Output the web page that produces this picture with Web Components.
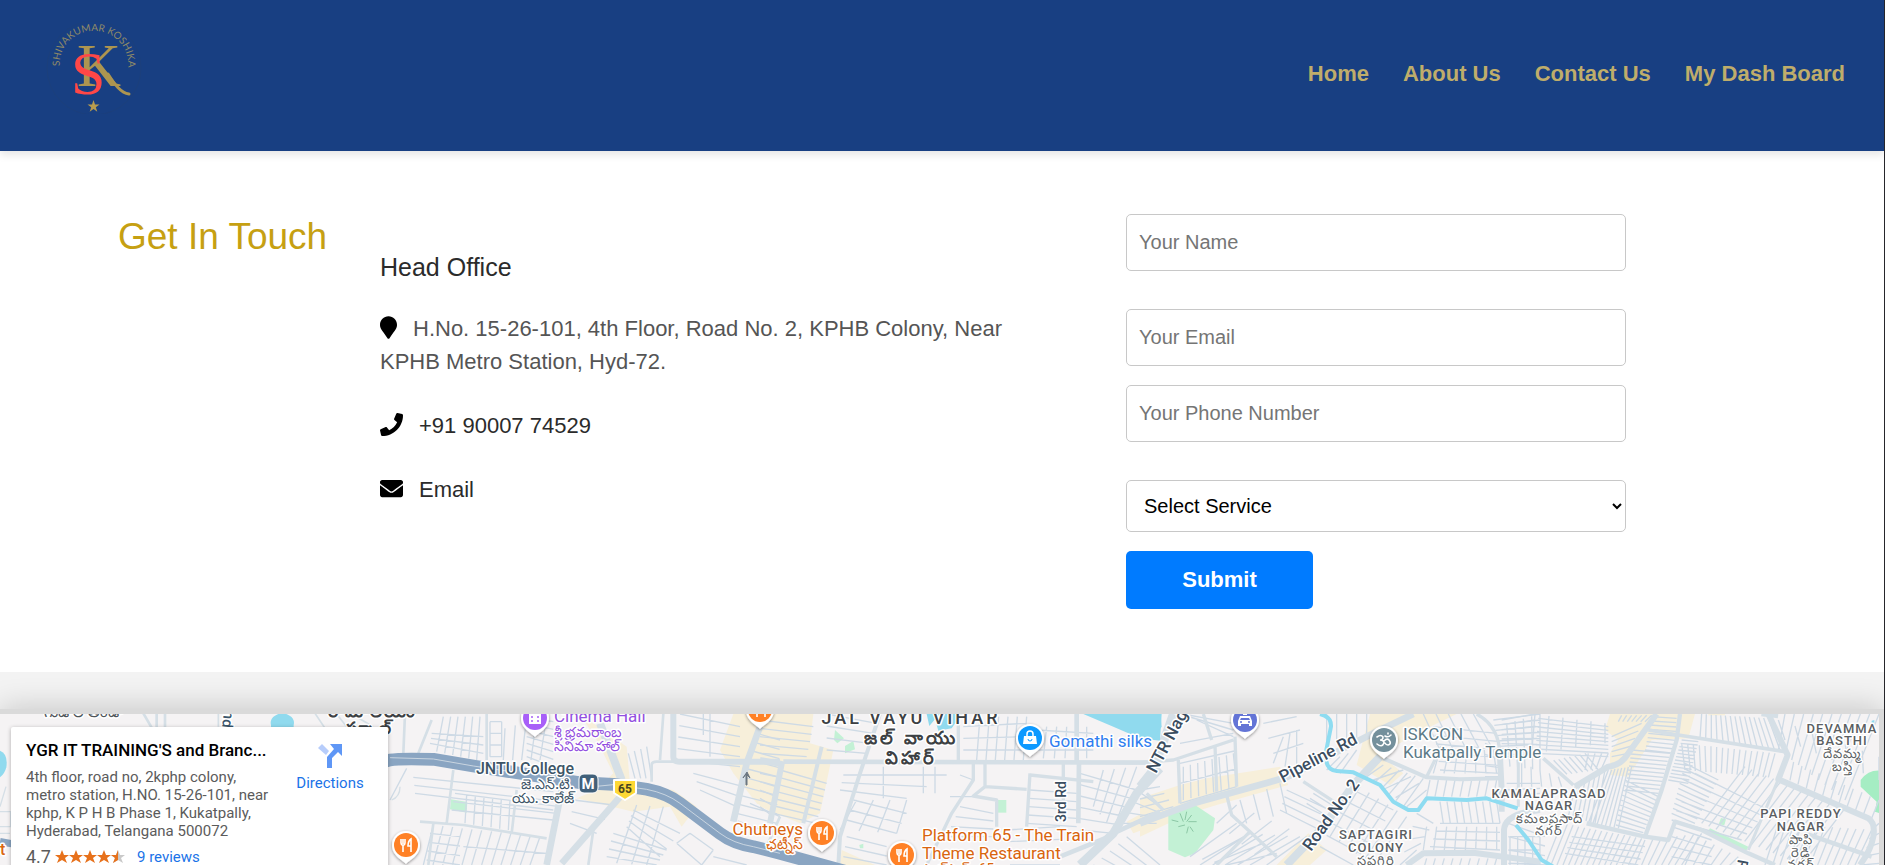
<!DOCTYPE html>
<html lang="en">
<head>
<meta charset="utf-8">
<title>Contact Us</title>
<meta name="viewport" content="width=device-width, initial-scale=1">
<style>
  * { box-sizing: border-box; }
  body {
    margin: 0;
    min-height: 100vh;
    display: flex;
    flex-direction: column;
    overflow: hidden;
    background: #fff;
    border-right: 1px solid #26262b;
    font-family: "Liberation Sans", Arial, sans-serif;
  }
  map-panel { flex: 1; }
</style>
</head>
<body>
<site-header>
  <nav-link href="#home">Home</nav-link>
  <nav-link href="#about">About Us</nav-link>
  <nav-link href="#contact">Contact Us</nav-link>
  <nav-link href="#dashboard">My Dash Board</nav-link>
</site-header>
<contact-section>
  <span slot="title">Get In Touch</span>
  <span slot="office">Head Office</span>
  <contact-row icon="pin" muted>H.No. 15-26-101, 4th Floor, Road No. 2, KPHB Colony, Near KPHB Metro Station, Hyd-72.</contact-row>
  <contact-row icon="phone" href="tel:+919000774529">+91 90007 74529</contact-row>
  <contact-row icon="mail" href="mailto:info@example.com">Email</contact-row>
  <contact-form slot="form"></contact-form>
</contact-section>
<map-panel>
  <map-canvas></map-canvas>
  <place-card slot="card"></place-card>
</map-panel>

<script>
class BaseElement extends HTMLElement {
  connectedCallback() {
    if (this.shadowRoot) return;
    this.attachShadow({ mode: 'open' }).innerHTML = this.render();
  }
}

customElements.define('brand-logo', class extends BaseElement {
  render() {
    return `<style>
      :host { display: block; width: 96px; height: 96px; }
      svg { display: block; }
    </style>
    <svg width="96" height="96" viewBox="0 0 96 96" role="img" aria-label="Shivakumar Koshika">
      <defs><path id="arc" d="M14 48C12 30 27 13 48 13S84 30 82 50"/></defs>
      <circle cx="48" cy="50" r="47" fill="none" stroke="#1c3f7c" stroke-width="1"/>
      <text font-family="Lato, sans-serif" font-size="10" fill="#8f8a68"><textPath href="#arc">SHIVAKUMAR KOSHIKA</textPath></text>
      <text x="31" y="68" font-family="Liberation Serif, serif" font-size="61" fill="#ad9550">K</text>
      <path d="M62 56C69 67 75 75 83 76" fill="none" stroke="#ad9550" stroke-width="3" stroke-linecap="round"/>
      <text x="25" y="76" font-family="Liberation Serif, serif" font-size="62" fill="#ff4747">S</text>
      <path d="M47.500 82l1.500 4.500h4.500l-3.700 2.700 1.500 4.500-3.800-2.700-3.800 2.700 1.500-4.500-3.700-2.700h4.500z" fill="#b79c4e"/>
    </svg>`;
  }
});

customElements.define('nav-link', class extends BaseElement {
  render() {
    return `<style>
      :host { display: block; }
      a { color: #bfad6b; font-size: 22px; line-height: 26px; font-weight: 700; text-decoration: none; white-space: nowrap; }
    </style><a href="${this.getAttribute('href')}"><slot></slot></a>`;
  }
});

customElements.define('site-header', class extends BaseElement {
  render() {
    return `<style>
      :host { display: block; position: relative; background: #183f82; box-shadow: 0 4px 8px rgba(0,0,0,.1); }
      header { display: flex; justify-content: space-between; align-items: flex-start; padding: 18px 39px 37px 46px; }
      nav { display: flex; gap: 34px; padding-top: 43px; }
    </style>
    <header><brand-logo></brand-logo><nav><slot></slot></nav></header>`;
  }
});

const ICONS = {
  pin: ['0 0 384 512', 17, 23, 'M172.268 501.67C26.97 291.031 0 269.413 0 192 0 85.961 85.961 0 192 0s192 85.961 192 192c0 77.413-26.97 99.031-172.268 309.67-9.535 13.774-29.93 13.773-39.464 0z'],
  phone: ['0 0 512 512', 23, 23, 'M493.4 24.6l-104-24c-11.3-2.6-22.9 3.3-27.5 13.9l-48 112c-4.2 9.8-1.4 21.3 6.9 28l60.6 49.6c-36 76.7-98.9 140.5-177.2 177.2l-49.6-60.6c-6.8-8.3-18.2-11.1-28-6.9l-112 48C3.9 366.5-2 378.1.6 389.4l24 104C27.1 504.2 36.7 512 48 512c256.1 0 464-207.5 464-464 0-11.2-7.7-20.9-18.6-23.4z'],
  mail: ['0 0 512 512', 23, 23, 'M502.3 190.8c3.9-3.1 9.7-.2 9.7 4.7V400c0 26.5-21.5 48-48 48H48c-26.5 0-48-21.5-48-48V195.6c0-5 5.7-7.8 9.7-4.7 22.4 17.4 52.1 39.5 154.1 113.6 21.1 15.4 56.7 47.8 92.2 47.6 35.7.3 72-32.8 92.3-47.6 102-74.1 131.6-96.3 154-113.7zM256 320c23.2.4 56.6-29.2 73.4-41.4 132.7-96.3 142.8-104.7 173.4-128.7 5.8-4.5 9.2-11.5 9.2-18.9v-19c0-26.5-21.5-48-48-48H48c-26.5 0-48 21.5-48 48v19c0 7.4 3.4 14.3 9.2 18.9 30.6 23.9 40.7 32.4 173.4 128.7 16.8 12.2 50.2 41.8 73.4 41.4z']
};

customElements.define('contact-row', class extends BaseElement {
  render() {
    const [box, w, h, d] = ICONS[this.getAttribute('icon')];
    const href = this.getAttribute('href');
    return `<style>
      :host { display: block; font-size: 22px; line-height: 33px; color: #2b2b2b; }
      :host([muted]) { color: #555; }
      p { margin: 0; }
      svg { fill: #000; vertical-align: -3px; margin-right: 16px; }
      a { color: inherit; text-decoration: none; }
    </style>
    <p><svg width="${w}" height="${h}" viewBox="${box}" aria-hidden="true"><path d="${d}"/></svg>${href ? `<a href="${href}"><slot></slot></a>` : '<slot></slot>'}</p>`;
  }
});

customElements.define('contact-section', class extends BaseElement {
  render() {
    return `<style>
      :host { display: block; background: #fff; }
      section { display: grid; grid-template-columns: 262px minmax(0, 1fr) 500px; padding: 63px 258px 63px 118px; }
      h2 { margin: 0; font-weight: 400; font-size: 37px; line-height: 46px; color: #c6a012; white-space: nowrap; }
      h3 { margin: 0 0 -3px; font-weight: 400; font-size: 25px; line-height: 33px; color: #2b2b2b; }
      .info { display: flex; flex-direction: column; gap: 31px; padding: 37px 90px 0 0; }
    </style>
    <section>
      <h2><slot name="title"></slot></h2>
      <div class="info"><h3><slot name="office"></slot></h3><slot></slot></div>
      <slot name="form"></slot>
    </section>`;
  }
});

customElements.define('contact-form', class extends BaseElement {
  render() {
    return `<style>
      :host { display: block; }
      * { box-sizing: border-box; }
      form { display: grid; gap: 38px; }
      div { display: grid; gap: 19px; }
      input, select { width: 100%; border: 1px solid #c8c8c8; border-radius: 5px; background: #fff; font: 20px "Liberation Sans", Arial, sans-serif; }
      input { height: 57px; padding: 0 12px; }
      input::placeholder { color: #757575; }
      select { height: 52px; padding: 0 13px; color: #000; }
      button { justify-self: start; width: 187px; height: 58px; border: 0; border-radius: 5px; background: #007bff; color: #fff; font: 700 22px "Liberation Sans", Arial, sans-serif; }
    </style>
    <form>
      <div><input type="text" aria-label="Your Name" placeholder="Your Name"></div>
      <div>
        <input type="email" aria-label="Your Email" placeholder="Your Email">
        <input type="tel" aria-label="Your Phone Number" placeholder="Your Phone Number">
      </div>
      <div>
        <select aria-label="Select Service"><option>Select Service</option></select>
        <button type="button">Submit</button>
      </div>
    </form>`;
  }
});

customElements.define('map-panel', class extends BaseElement {
  render() {
    return `<style>
      :host { display: flex; flex-direction: column; padding-top: 37px; background: #f3f3f3; overflow: hidden; }
      .frame { position: relative; flex: 1; min-height: 150px; border: 5px solid #dadada; border-width: 5px 5px 0 0; box-shadow: 0 0 30px rgba(0,0,0,.2); background: #f5f3f4; }
      .clip { position: absolute; inset: 0; overflow: hidden; }
      slot[name=card] { display: block; position: absolute; left: 11px; top: 13px; }
    </style>
    <div class="frame"><div class="clip"><slot></slot><slot name="card"></slot></div></div>`;
  }
});

customElements.define('place-card', class extends BaseElement {
  render() {
    const star = 'M7 0l2 5h5l-4 3 2 5-5-3-5 3 2-5-4-3h5z';
    let stars = '';
    for (let i = 0; i < 5; i++) stars += `<path transform="translate(${i * 14} 0)" fill="${i < 4 ? '#e7711b' : '#c9c9c9'}" d="${star}"/>`;
    return `<style>
      :host { display: flex; width: 377px; background: #fff; border-radius: 2px; box-shadow: 0 1px 4px rgba(0,0,0,.3); padding: 13px 15px 16px; font-family: Roboto, sans-serif; font-size: 15px; line-height: 18px; color: #5b5b5b; }
      .info { width: 261px; }
      h4 { margin: 0 0 8px; font-size: 17px; line-height: 20px; font-weight: 500; color: #000; white-space: nowrap; }
      p { margin: 0; width: 246px; }
      .rating { display: flex; align-items: center; margin-top: 5px; gap: 4px; line-height: 24px; }
      b { font-weight: 400; font-size: 18px; }
      a { color: #1a73e8; text-decoration: none; }
      .rating a { margin-left: 8px; }
      .dir { flex: 1; display: flex; flex-direction: column; align-items: center; gap: 6px; padding: 4px 0 0 0; }
    </style>
    <div class="info">
      <h4>YGR IT TRAINING'S and Branc...</h4>
      <p>4th floor, road no, 2kphp colony, metro station, H.NO. 15-26-101, near kphp, K P H B Phase 1, Kukatpally, Hyderabad, Telangana 500072</p>
      <div class="rating"><b>4.7</b><svg width="70" height="14" viewBox="0 0 70 14" aria-hidden="true">${stars}<path fill="#e7711b" d="M63 0v10l-5 3 2-5-4-3h5z"/></svg><a href="#reviews">9 reviews</a></div>
    </div>
    <a class="dir" href="#directions">
      <svg width="24" height="24" viewBox="0 0 24 24" aria-hidden="true"><path d="M0 4l4-4 7 7-3 4z" fill="#b7cdfb"/><path d="M12 0h12v12l-4-4-6 6v10H9V13l7-8z" fill="#5f97f6"/></svg>
      Directions
    </a>`;
  }
});

/* Street data. Every tile is drawn in thirds of a pixel from its own origin (px).
   roads: [width, path]; rows: streets spread evenly from edge A-B to edge C-D: [ax,ay,bx,by,cx,cy,dx,dy,count]. */
const TILES = [
  { x: 0, y: -54,
    water: ['M813 195a35 28 0 1 1 68 0v20h-68z', 'M0 272q25 10 19 50q-5 20-19 30z'],
    roads: [[8, 'M430 160L465 220M495 160V215M470 160V210'], [5, 'M655 162V200M945 160L975 205M1010 162L1040 200M1060 165L1120 200'], [4, 'M18 380L0 440M0 455H32V500H0M0 520H30M1175 420Q1200 410 1200 380']],
    blue: [[22, 'M0 545L40 552']], rows: [] },
  { x: 380, y: -24,
    land: ['M1060 72H1200V380L1130 340 1060 250 1020 180z', 'M600 72L740 170 750 280 880 300 950 350 905 410 870 350 760 365 590 325 650 300 700 250 650 150z'],
    park: ['M213 328l49 8-2 32-50-10z'],
    roads: [[20, 'M1140 110L1100 220 1060 395M545 300L500 525'], [18, 'M880 72V200Q880 215 900 215H1200'], [24, 'M660 100L725 270'], [20, 'M725 315L545 520'], [8, 'M120 395L250 405 500 445M160 400L145 525M220 240L200 400M815 275V225Q815 215 830 215H880M1200 380L1160 470M640 420L625 525M70 190L75 72M115 190L155 90M320 72V210M410 300L395 430M850 72L840 210']],
    rows: [
      [330, 95, 330, 200, 365, 95, 365, 200, 3], [330, 95, 365, 95, 330, 200, 365, 200, 1], [375, 115, 500, 80, 370, 210, 480, 210, 4], [440, 80, 440, 200, 520, 95, 520, 230, 6], [190, 80, 300, 80, 170, 185, 290, 210, 5], [155, 130, 150, 160, 310, 140, 310, 190, 2],
      [100, 262, 105, 310, 520, 305, 520, 360, 2], [225, 310, 215, 360, 540, 350, 520, 390, 2], [80, 235, 80, 235, 30, 330, 30, 330, 1], [260, 315, 390, 330, 255, 400, 385, 420, 5],
      [160, 405, 480, 440, 130, 525, 450, 525, 11], [150, 430, 140, 510, 240, 440, 240, 525, 3], [250, 470, 250, 470, 500, 490, 500, 490, 1],
      [745, 190, 800, 170, 765, 265, 815, 265, 3], [900, 72, 890, 210, 1080, 110, 1080, 230, 4], [970, 72, 990, 72, 970, 135, 990, 200, 1],
      [940, 250, 960, 300, 1090, 290, 1070, 350, 2], [1130, 130, 1070, 370, 1200, 150, 1190, 400, 9],
      [580, 330, 570, 400, 700, 345, 650, 430, 2], [760, 360, 740, 410, 900, 430, 840, 500, 3], [770, 345, 850, 350, 710, 520, 800, 525, 2], [700, 430, 680, 500, 860, 480, 830, 525, 3],
      [890, 460, 930, 430, 965, 525, 1000, 480, 1], [890, 460, 965, 525, 930, 430, 1000, 480, 1], [1110, 340, 1000, 500, 1200, 380, 1100, 525, 3]
    ],
    blue: [[38, 'M-40 255Q0 215 30 210T160 208L280 228 600 278 700 283 800 298Q860 310 900 340L1020 430Q1060 460 1120 470L1200 490 1400 545']],
    line: ['M30 203L160 207 280 228 400 246M640 290L700 284 800 298Q860 310 900 340L1020 430Q1060 460 1120 470L1200 490'] },
  { x: 760, y: -24,
    land: ['M0 72H160L150 160 220 180 180 370 120 400 0 350z', 'M1100 395L1200 340V400L1120 430z', 'M245 480L345 525H240z'],
    water: ['M970 72L1060 110 1140 145 1200 152 1205 72z', 'M500 72H605L575 115 535 122 525 88 508 108z'],
    park: ['M225 120l27 25-20 15-10-10z', 'M255 168l25-15 5 25-30 12z', 'M712 330h27v38h-27z', 'M298 465l12-4v14h-10z'],
    roads: [[14, 'M0 215H50M70 215L1200 218'], [18, 'M0 210L65 222 30 400'], [12, 'M360 72L300 250 240 440 235 525M185 170L130 400'], [10, 'M595 72V215M640 220V270L575 370 500 525M675 220V290L640 318 710 330V410M675 290L800 298M810 250L800 410M810 255L1000 275M910 220V390'], [14, 'M950 72V215M957 215L955 400'], [26, 'M1200 235L1130 310 1060 430 960 525'], [14, 'M1060 430L1200 365M1060 435L900 500']],
    rows: [
      [0, 90, 0, 190, 160, 110, 140, 200, 4], [60, 240, 40, 370, 200, 280, 170, 400, 6], [0, 250, 0, 350, 60, 262, 40, 380, 4],
      [200, 72, 200, 180, 350, 100, 320, 190, 3], [250, 255, 240, 300, 560, 255, 440, 325, 2], [370, 230, 490, 230, 370, 325, 490, 310, 1], [490, 230, 525, 230, 490, 305, 525, 310, 1],
      [290, 330, 440, 330, 240, 420, 410, 430, 3], [280, 330, 260, 390, 440, 370, 410, 430, 2], [600, 255, 570, 320, 640, 270, 640, 320, 1],
      [660, 80, 800, 80, 650, 210, 790, 210, 5], [610, 110, 610, 180, 800, 100, 800, 180, 2], [860, 110, 980, 110, 850, 205, 980, 205, 4], [830, 120, 830, 180, 1000, 130, 1000, 180, 1],
      [1030, 240, 1130, 230, 1000, 350, 1060, 420, 3], [960, 250, 960, 420, 1130, 300, 1060, 430, 5], [810, 300, 800, 400, 950, 310, 950, 410, 4],
      [600, 350, 560, 440, 700, 370, 700, 440, 3], [740, 420, 750, 525, 900, 410, 900, 525, 3], [1130, 300, 1080, 400, 1200, 350, 1190, 400, 3], [1100, 440, 1000, 525, 1200, 525, 1080, 560, 4], [260, 440, 250, 500, 380, 470, 380, 525, 2]
    ] },
  { x: 1140, y: -24,
    land: ['M0 325L120 285 200 265 420 230 445 285 230 345 150 370 0 440z', 'M690 72H950L830 130 720 195 790 250 750 285 650 225z', 'M410 525L505 430 560 480 510 525z'],
    water: ['M0 72H62L65 110 40 145 0 150z'],
    park: ['M85 365L165 345 225 385 220 420 165 490 135 502 85 480z'],
    roads: [[20, 'M0 400L160 340 440 262 700 130 820 72'], [26, 'M0 290L40 240 100 72'], [24, 'M720 200L640 285 550 410 440 525'], [10, 'M225 165L230 305M115 210L120 340M285 140L290 290M0 218L100 210 280 150M190 72L215 150M260 315L275 375 330 425 410 500M330 425L230 525M490 275L590 340M20 310L70 360'], [12, 'M730 205L860 262 960 268 1085 265'], [10, 'M860 260L905 170M1010 72Q1080 110 1080 200'], [18, 'M1080 200L1085 300V365M1200 360Q1095 370 1092 420V525M800 525L850 490 1000 488 1200 515']],
    rows: [
      [120, 160, 120, 340, 280, 130, 290, 290, 3], [130, 230, 280, 190, 130, 330, 290, 290, 7], [130, 72, 170, 90, 280, 100, 280, 140, 2], [0, 300, 0, 380, 60, 290, 100, 350, 3],
      [370, 100, 400, 190, 470, 80, 490, 160, 2], [430, 140, 470, 120, 400, 220, 470, 240, 2], [560, 72, 680, 72, 560, 160, 680, 150, 4], [600, 200, 650, 180, 560, 240, 600, 250, 2],
      [300, 330, 420, 280, 320, 400, 440, 370, 3], [440, 300, 420, 360, 590, 370, 560, 430, 3], [520, 310, 500, 340, 600, 360, 580, 390, 2],
      [230, 400, 380, 525, 290, 345, 500, 440, 4], [150, 500, 260, 525, 290, 400, 410, 490, 3], [180, 525, 330, 525, 330, 430, 480, 440, 4],
      [640, 300, 540, 470, 760, 360, 640, 525, 5], [660, 290, 800, 380, 570, 440, 700, 525, 5],
      [730, 225, 850, 265, 680, 260, 790, 350, 5], [700, 270, 800, 350, 790, 240, 860, 300, 3], [870, 270, 1070, 270, 860, 320, 1060, 320, 8],
      [900, 335, 1070, 335, 910, 400, 1080, 400, 8], [900, 400, 870, 470, 1080, 400, 1080, 480, 3], [830, 370, 780, 525, 880, 400, 830, 480, 4], [860, 410, 1070, 410, 850, 480, 1070, 480, 7],
      [850, 72, 1000, 72, 900, 180, 1060, 180, 4], [880, 110, 900, 240, 1070, 130, 1080, 250, 5], [900, 180, 1060, 180, 880, 250, 1070, 250, 6], [1060, 90, 1080, 200, 1200, 72, 1200, 200, 7], [1100, 100, 1200, 72, 1110, 230, 1200, 240, 4],
      [1100, 280, 1090, 320, 1200, 280, 1200, 310, 2], [1110, 440, 1200, 440, 1110, 525, 1200, 525, 4], [1110, 440, 1110, 520, 1200, 440, 1200, 520, 2], [860, 505, 1070, 505, 850, 540, 1060, 540, 8]
    ] },
  { x: 1485, y: -24,
    land: ['M375 72H630L610 145 500 150 430 260 375 255V190L400 150 360 120z', 'M670 66H720V76H670z'],
    park: ['M675 415L790 470 780 490 665 430z', 'M708 384l15 4-5 18-17-3z'],
    strong: ['M1127 270Q1150 240 1184 242V370L1170 365 1175 335 1127 290z'],
    water: ['M1160 92l8-2v12l-8-3z'],
    roads: [[18, 'M515 72L430 190Q410 225 370 230L270 290'], [13, 'M585 72L575 150 530 300 480 440'], [11, 'M490 120L580 135 900 185M175 205L265 285'], [18, 'M850 72L908 195 880 268 1150 385Q1172 400 1165 440T1125 525'], [26, 'M830 66L880 72'], [13, 'M305 400L480 440 550 450 570 395 650 420 790 490 870 525M960 430L1160 500'], [9, 'M880 268L790 480M100 210V350']],
    rows: [
      [650, 72, 850, 85, 645, 145, 885, 180, 14], [590, 160, 870, 190, 600, 240, 850, 262, 16], [780, 230, 1080, 355, 650, 400, 950, 525, 14], [900, 205, 1182, 330, 890, 260, 1160, 385, 11],
      [880, 90, 1182, 200, 900, 150, 1182, 270, 6], [900, 72, 1182, 72, 880, 180, 1080, 330, 10], [630, 250, 560, 390, 850, 360, 770, 450, 5], [600, 220, 560, 370, 700, 270, 630, 400, 10],
      [880, 400, 1160, 420, 840, 525, 1110, 525, 12], [1182, 400, 1182, 520, 1160, 420, 1130, 525, 4],
      [590, 150, 550, 270, 640, 155, 610, 280, 12], [440, 180, 420, 300, 555, 190, 520, 310, 10], [420, 270, 390, 420, 520, 320, 470, 440, 10], [370, 240, 440, 230, 310, 400, 400, 415, 7], [380, 140, 380, 200, 470, 100, 430, 190, 4], [410, 76, 500, 76, 400, 95, 480, 95, 6], [500, 80, 480, 180, 575, 85, 570, 190, 8],
      [50, 90, 50, 190, 150, 72, 160, 200, 7], [150, 72, 360, 100, 140, 190, 360, 160, 5], [160, 85, 150, 190, 370, 110, 370, 200, 8], [190, 215, 300, 190, 230, 255, 340, 240, 7], [310, 190, 370, 190, 300, 240, 350, 235, 3], [110, 220, 220, 260, 110, 290, 230, 290, 4], [270, 290, 360, 240, 250, 380, 330, 400, 6],
      [230, 400, 470, 445, 180, 525, 430, 525, 14], [260, 440, 240, 490, 480, 470, 460, 525, 3], [480, 450, 650, 430, 450, 525, 590, 525, 7], [560, 410, 560, 500, 680, 450, 680, 525, 3], [640, 440, 760, 500, 600, 525, 720, 540, 5],
      [0, 160, 0, 260, 45, 180, 45, 260, 3], [70, 400, 70, 520, 180, 440, 180, 525, 3]
    ] }
];

/* Labels: [text, x, y, size, weight, fill, anchor, rotation, tracking] */
const LABELS = [
  ['గుడాల తండా', 44, 3, 15, 500, '#4d5358'], ['pu', 230, 14, 15, 500, '#3b556b', 'start', -84],
  ['రామాలయం', 328, 3, 17, 700, '#3c4043', 'start', 0, 2], ['స్కూల్', 346, 20, 17, 700, '#3c4043', 'start', 0, 2], ['t', 0, 141, 16, 500, '#d9650f'],
  ['Cinema Hall', 554, 8, 17, 400, '#9350e0'], ['శ్రీ భ్రమరాంబ', 554, 23, 14, 400, '#9350e0'], ['సినిమా హాల్', 554, 37, 14, 400, '#9350e0'],
  ['JNTU College', 574, 60, 16, 500, '#3d5567', 'end'], ['జె.ఎన్.టి.', 574, 75, 14, 500, '#3d5567', 'end'], ['యు. కాలేజ్', 574, 89, 14, 500, '#3d5567', 'end'],
  ['Chutneys', 803, 121, 17, 400, '#d9650f', 'end'], ['ఛట్నీస్', 803, 135, 14, 400, '#d9650f', 'end'],
  ['Platform 65 - The Train', 922, 127, 17, 400, '#d9650f'], ['Theme Restaurant', 922, 145, 17, 400, '#d9650f'], ['ప్లాట్‌ఫామ్ 65', 922, 160, 14, 400, '#d9650f'],
  ['JAL VAYU VIHAR', 911, 10, 18, 500, '#3c4043', 'middle', 0, 3], ['జల్ వాయు', 911, 30, 18, 700, '#3c4043', 'middle', 0, 3], ['విహార్', 911, 50, 18, 700, '#3c4043', 'middle', 0, 3],
  ['Gomathi silks', 1049, 33, 17, 400, '#2f7df0'], ['NTR Nag', 1156, 60, 17, 500, '#3b4d5f', 'start', -62],
  ['3rd Rd', 1066, 108, 14, 500, '#3b4d5f', 'start', -90], ['Pipeline Rd', 1283, 69, 17, 500, '#3b4d5f', 'start', -28], ['Road No. 2', 1311, 138, 17, 500, '#3b4d5f', 'start', -54],
  ['ISKCON', 1403, 26, 17, 400, '#5c7a87'], ['Kukatpally Temple', 1403, 44, 17, 400, '#5c7a87'],
  ['SAPTAGIRI', 1376, 125, 13, 500, '#5a5e62', 'middle', 0, 1], ['COLONY', 1376, 138, 13, 500, '#5a5e62', 'middle', 0, 1], ['సప్తగిరి', 1376, 151, 13, 500, '#5a5e62', 'middle', 0, 1],
  ['KAMALAPRASAD', 1549, 84, 13, 500, '#5a5e62', 'middle', 0, 1], ['NAGAR', 1549, 96, 13, 500, '#5a5e62', 'middle', 0, 1], ['కమలప్రసాద్', 1549, 109, 13, 500, '#5a5e62', 'middle', 0, 1], ['నగర్', 1549, 121, 13, 500, '#5a5e62', 'middle', 0, 1],
  ['DEVAMMA', 1842, 19, 13, 500, '#5a5e62', 'middle', 0, 1], ['BASTHI', 1842, 31, 13, 500, '#5a5e62', 'middle', 0, 1], ['దేవమ్మ', 1842, 44, 13, 500, '#5a5e62', 'middle', 0, 1], ['బస్తి', 1842, 57, 13, 500, '#5a5e62', 'middle', 0, 1],
  ['PAPI REDDY', 1801, 104, 13, 500, '#5a5e62', 'middle', 0, 1], ['NAGAR', 1801, 117, 13, 500, '#5a5e62', 'middle', 0, 1], ['పాపి', 1801, 130, 13, 500, '#5a5e62', 'middle', 0, 1], ['రెడ్డి', 1801, 143, 13, 500, '#5a5e62', 'middle', 0, 1], ['నగర్', 1801, 155, 13, 500, '#5a5e62', 'middle', 0, 1],
  ['R', 1738, 145, 15, 500, '#3b4d5f', 'start', 100]
];

const GLYPHS = {
  food: '<path d="M-5-6v4q0 2 2 2.500V7M-3-6v5M-1-6v4q0 2-2 2.500M5 7V-6Q2-4 2 1h3" fill="none" stroke="#fff" stroke-width="1.600"/>',
  film: '<path d="M-6-6H6V6H-6z" fill="#fff"/><path d="M-3-6V6M3-6V6" stroke="#a85ff8" stroke-dasharray="2 2" stroke-width="1.500"/>',
  bag: '<path d="M-6-2H6L7 6H-7z" fill="#fff"/><path d="M-3-2V-4a3 3 0 0 1 6 0v2" fill="none" stroke="#fff" stroke-width="1.500"/><path d="M-2 1a2 2 0 0 0 4 0" fill="none" stroke="#0d99ff"/>',
  car: '<path d="M-5-4H5L7 1V6H4V4H-4V6H-7V1zM-2-7h4v2h-4z" fill="#fff"/><path d="M-4-2H4L5 0H-5z" fill="#6374d6"/><circle cx="-4" cy="2" r="1" fill="#6374d6"/><circle cx="4" cy="2" r="1" fill="#6374d6"/>',
  om: '<path d="M-7-3q4-3 6 0q0 3-3 3q4 0 4 3q-2 5-7 1M0 1q3-3 5-1q3 4-1 5q-2 0-3-2M1-4q3 2 6-1M4-7v1" fill="none" stroke="#fff" stroke-width="1.600" stroke-linecap="round"/>'
};
/* Pins: [x, y, colour, glyph] */
const PINS = [[406, 131, '#ff8126', 'food'], [535, 4, '#a85ff8', 'film'], [760, -4, '#ff8126', 'food'], [822, 119, '#ff8126', 'food'], [902, 141, '#ff8126', 'food'], [1030, 24, '#0d99ff', 'bag'], [1245, 6, '#6374d6', 'car'], [1384, 26, '#74909c', 'om']];

customElements.define('map-canvas', class extends BaseElement {
  render() {
    const fills = (list, c) => (list || []).map(d => `<path d="${d}" fill="${c}"/>`).join('');
    const strokes = (list, c) => (list || []).map(([w, d]) => `<path d="${d}" stroke="${c}" stroke-width="${w}"/>`).join('');
    const rows = t => t.rows.map(([ax, ay, bx, by, cx, cy, dx, dy, n]) => {
      let d = '';
      for (let i = 0; i <= n; i++) {
        const k = i / n;
        d += `M${Math.round(ax + (bx - ax) * k)} ${Math.round(ay + (by - ay) * k)}L${Math.round(cx + (dx - cx) * k)} ${Math.round(cy + (dy - cy) * k)}`;
      }
      return d;
    }).join('');
    const layer = fn => TILES.map(t => `<g transform="scale(.33333) translate(${t.x * 3} ${t.y * 3})">${fn(t)}</g>`).join('');
    const labels = LABELS.map(([s, x, y, size, w, c, a = 'start', r = 0, ls = 0]) =>
      `<text x="${x}" y="${y}" font-size="${size}" font-weight="${w}" fill="${c}" text-anchor="${a}"${ls ? ` letter-spacing="${ls}"` : ''}${r ? ` transform="rotate(${r} ${x} ${y})"` : ''}>${s}</text>`).join('');
    const pins = PINS.map(([x, y, c, g]) =>
      `<g transform="translate(${x} ${y})"><path d="M0 19C-3 15-14 11-14 0a14 14 0 0 1 28 0C14 11 3 15 0 19z" fill="#fff" filter="url(#drop)"/><circle r="12" fill="${c}"/>${GLYPHS[g]}</g>`).join('');
    return `<style>
      :host { display: block; position: absolute; inset: 0; }
      svg { display: block; width: 100%; height: 100%; }
      text { font-family: Roboto, "Noto Sans", sans-serif; paint-order: stroke; stroke: #fff; stroke-width: 3px; stroke-linejoin: round; }
      .plain { stroke: none; }
    </style>
    <svg viewBox="0 0 1879 151" preserveAspectRatio="xMinYMin slice" role="img" aria-label="Map of Kukatpally">
      <defs><filter id="drop" x="-50%" y="-50%" width="200%" height="200%"><feDropShadow dx="0" dy="1" stdDeviation="1.500" flood-opacity=".45"/></filter></defs>
      ${layer(t => fills(t.land, '#f7efda') + fills(t.park, '#c3f1d5') + fills(t.strong, '#a5edc3'))}
      <g fill="none" stroke-linejoin="round">
        ${layer(t => `<path d="${rows(t)}" stroke="#cedae5" stroke-width="4"/>`)}
        ${layer(t => strokes(t.roads, '#d5dfe6'))}
        ${layer(t => strokes(t.blue, '#8aa5c2'))}
        ${layer(t => (t.line || []).map(d => `<path d="${d}" stroke="#c9d5e0" stroke-width="3"/>`).join(''))}
      </g>
      ${layer(t => fills(t.water, '#90daee'))}
      <g transform="scale(.33333) translate(3420 -72)" fill="none" stroke="#8edcf1" stroke-width="12" stroke-linejoin="round">
        <path d="M540 72Q575 80 573 110L557 190Q555 240 590 243L640 247 720 285 760 335 805 360H835L860 325 980 330 1040 325 1133 355M1128 405L1165 450 1205 510 1240 530"/>
        <path d="M95 390l20 5m5-25l10 25m10-30l-5 25m20-15l-15 20m30 0l-25 0m-30 15l20-5m5 25l5-20m15 15l-10-15" stroke="#8cc7a5" stroke-width="3"/>
      </g>
      <path d="M746 71v-11l-3 4 4-6 3 6-3-3v10z" fill="#6b7680" stroke="#6b7680"/>
      ${labels}
      <rect x="579" y="60" width="19" height="19" rx="5" fill="#41607a" stroke="#fff" stroke-width="1"/>
      <text class="plain" x="588" y="75" font-size="15" font-weight="700" fill="#fff" text-anchor="middle">M</text>
      <path d="M614 66h22v13l-11 7-11-7z" fill="#fdd835" stroke="#fff" stroke-width="2" stroke-linejoin="round"/>
      <text class="plain" x="625" y="79" font-size="12" font-weight="700" fill="#4a4520" text-anchor="middle">65</text>
      ${pins}
    </svg>`;
  }
});
</script>
</body>
</html>
